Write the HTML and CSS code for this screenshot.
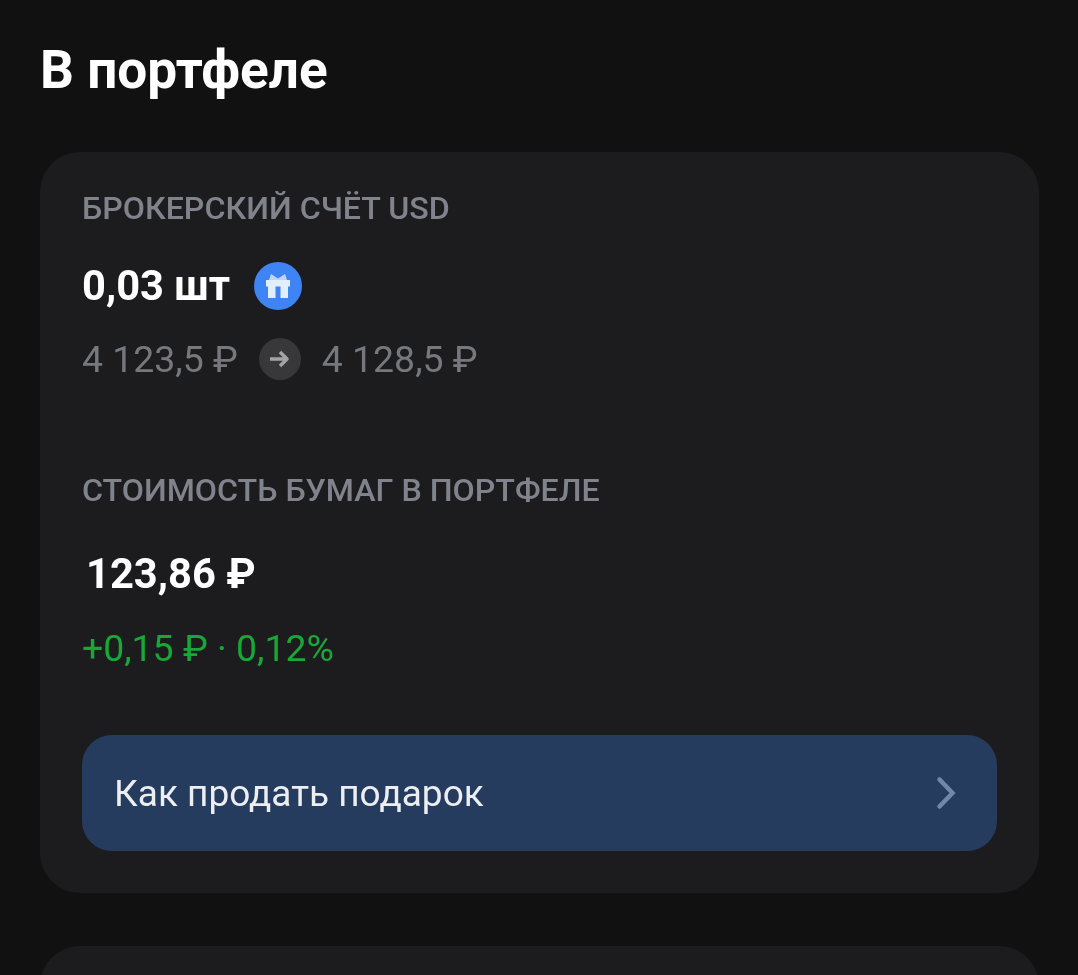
FILE: index.html
```html
<!doctype html>
<html>
<head>
<meta charset="utf-8">
<title>В портфеле</title>
<link rel="stylesheet" href="styles.css">
</head>
<body>
	<div id="wrap">
		<h1 class="pageTitle">В портфеле</h1>
		<div class="card">
			<div class="label">БРОКЕРСКИЙ СЧЁТ USD</div>
			<div class="amountRow">
				<span class="amount">0,03 шт</span>
				<svg class="giftIcon" width="48" height="48" viewBox="0 0 48 48">
					<circle cx="24" cy="24" r="24" fill="#3f84f5"/>
					<path d="M17 12l7 4.500 7-4.500 2 6H15z" fill="#bcd5fb"/>
					<path d="M12 18h24v6.500h-2V36H26.500V24.500h-5V36H14V24.500h-2z" fill="#e3eefd"/>
				</svg>
			</div>
			<div class="priceRow">
				<span>4 123,5 ₽</span>
				<svg class="arrowIcon" width="42" height="42" viewBox="0 0 42 42">
					<circle cx="21" cy="21" r="21" fill="#38383a"/>
					<path d="M11 21h17M21 14l7 7-7 7" fill="none" stroke="#a3a3a5" stroke-width="3.500" stroke-linejoin="round"/>
				</svg>
				<span>4 128,5 ₽</span>
			</div>
			<div class="label labelValue">СТОИМОСТЬ БУМАГ В ПОРТФЕЛЕ</div>
			<div class="amount total">123,86 ₽</div>
			<div class="profit">+0,15 ₽ · 0,12%</div>
			<a class="sellBtn" href="#">
				<span>Как продать подарок</span>
				<svg width="24" height="36" viewBox="0 0 24 36">
					<path d="M4.500 4.500L17.500 18L4.500 31.500" fill="none" stroke="#7186a8" stroke-width="4.500" stroke-linecap="round"/>
				</svg>
			</a>
		</div>
		<div class="card cardNext"></div>
	</div>
</body>
</html>
```

FILE: styles.css
```css
html,
body {
	height: 100%;
}
body {
	margin: 0;
	background: #111112;
	color: #fff;
	font-family: Roboto, "Liberation Sans", sans-serif;
	overflow: hidden;
}
#wrap {
	height: 975px;
	padding: 40px 39px 0 40px;
	box-sizing: border-box;
	overflow: hidden;
	filter: blur(0.7px);
}
.pageTitle {
	margin: 0 0 52px;
	font-size: 53.200px;
	line-height: 60px;
	font-weight: 700;
}
.card {
	padding: 37px 42px 42px;
	background: #1c1c1e;
	border-radius: 40px;
}
.label {
	font-size: 32.200px;
	line-height: 38px;
	font-weight: 500;
	color: #80838b;
}
.amountRow {
	display: flex;
	align-items: center;
	gap: 24px;
	margin-top: 35px;
}
.amount {
	font-size: 41.700px;
	line-height: 48px;
	font-weight: 700;
}
.priceRow {
	display: flex;
	align-items: center;
	gap: 21px;
	margin-top: 28px;
	font-size: 37.400px;
	line-height: 42px;
	color: #77787d;
}
.labelValue {
	margin-top: 91px;
}
.total {
	margin-top: 41px;
	padding-left: 4px;
}
.profit {
	margin-top: 29px;
	font-size: 37.400px;
	line-height: 42px;
	color: #17a838;
}
.sellBtn {
	display: flex;
	align-items: center;
	justify-content: space-between;
	height: 116px;
	margin-top: 66px;
	padding: 0 38px 0 32px;
	background: #263c5f;
	border-radius: 30px;
	color: #eceef2;
	font-size: 37px;
	text-decoration: none;
}
.cardNext {
	height: 200px;
	margin-top: 53px;
	padding: 0;
}
```
